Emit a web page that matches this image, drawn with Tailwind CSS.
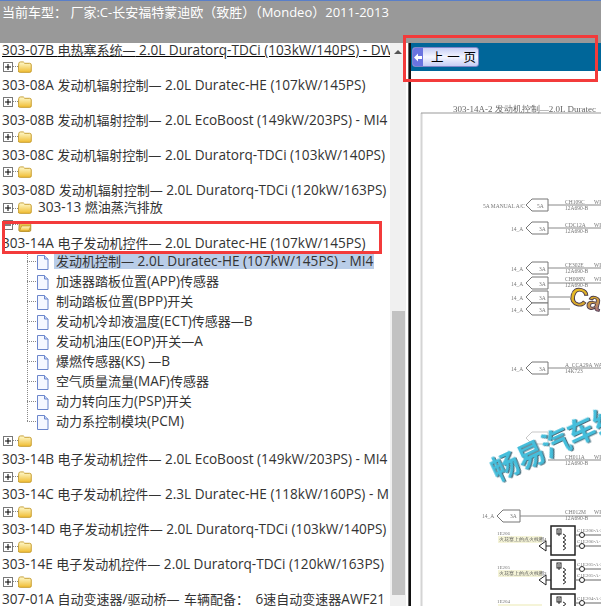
<!DOCTYPE html>
<html lang="zh">
<head>
    <meta charset="UTF-8">
    <title>303-14A</title>
    <script src="https://cdn.jsdelivr.net/npm/@tailwindcss/browser@4"></script>
</head>
<body class="bg-white overflow-hidden">
<svg width="0" height="0" class="absolute">
    <defs>
        <linearGradient id="fold" x1="0" y1="0" x2="0" y2="1"><stop offset="0" stop-color="#fffbd0"/><stop offset="1" stop-color="#f0bc30"/></linearGradient>
        <linearGradient id="logo" x1="0" y1="0" x2="1" y2="1"><stop offset="0" stop-color="#f2c81e"/><stop offset=".55" stop-color="#d9a92a"/><stop offset="1" stop-color="#9a5fa8"/></linearGradient>
        <symbol id="plus" viewBox="0 0 10 10"><rect x=".5" y=".5" width="9" height="9" fill="#fff" stroke="#777"/><path d="M2 5h6M5 2v6" stroke="#000"/></symbol>
        <symbol id="minus" viewBox="0 0 10 10"><rect x=".5" y=".5" width="9" height="9" fill="#fff" stroke="#777"/><path d="M2 5h6" stroke="#000"/></symbol>
        <symbol id="folder" viewBox="0 0 15 13"><path d="M.7 3q0-2 2-2h3l1.500 1.500h5.300q1.800 0 1.800 1.800v6.500q0 1.500-1.500 1.500h-10.600q-2 0-2-1.500z" fill="url(#fold)" stroke="#c49a2a"/></symbol>
        <symbol id="folder-open" viewBox="0 0 15 13"><path d="M.7 3q0-2 2-2h3l1.500 1.500h5.300q1.800 0 1.800 1.800v6.500q0 1.500-1.500 1.500h-10.600q-2 0-2-1.500z" fill="#e9c14f" stroke="#a8831e"/><path d="M1 11.800l2.500-6h10.800l-2.300 6z" fill="url(#fold)" stroke="#c49a2a"/></symbol>
        <symbol id="doc" viewBox="0 0 13 15"><path d="M1.500.5h7l3.500 3.500v10.500h-10.500z" fill="#f4f7ff" stroke="#6b86cc"/><path d="M8.500.5v3.500h3.500" fill="#c9d6f4" stroke="#6b86cc"/></symbol>
    </defs>
</svg>

<div class="relative w-[601px] h-[606px] overflow-hidden flex flex-col font-['Open_Sans','Noto_Sans_CJK_SC',sans-serif] text-[13.6px] text-[#333]">
    <!-- top bar -->
    <div class="h-[43px] shrink-0 bg-[#999999] border-t border-[#5a7fc8] pl-[2px] text-white text-[13px] leading-[22px] whitespace-nowrap">当前车型： 厂家:C-长安福特蒙迪欧（致胜）（Mondeo）2011-2013</div>

    <div class="flex flex-1 min-h-0">
        <!-- tree -->
        <div class="w-[390px] shrink-0 overflow-hidden whitespace-nowrap leading-[18px] -mt-[2px]">
            <div class="h-[18px] pl-[2px] underline decoration-black">303-07B <span class="text-[13px]">电热塞系统—</span> 2.0L Duratorq-TDCi (103kW/140PS) - DW</div>
            <div class="h-[17px] pb-[2px] flex items-center pl-[3px]"><svg class="w-[10px] h-[10px]"><use href="#plus"/></svg><div class="w-[5px] border-t border-dotted border-[#888]"></div><svg class="w-[14px] h-[12px]"><use href="#folder"/></svg></div>
            <div class="h-[18px] pl-[2px]">303-08A <span class="text-[13px]">发动机辐射控制—</span> 2.0L Duratec-HE (107kW/145PS)</div>
            <div class="h-[17px] pb-[2px] flex items-center pl-[3px]"><svg class="w-[10px] h-[10px]"><use href="#plus"/></svg><div class="w-[5px] border-t border-dotted border-[#888]"></div><svg class="w-[14px] h-[12px]"><use href="#folder"/></svg></div>
            <div class="h-[18px] pl-[2px]">303-08B <span class="text-[13px]">发动机辐射控制—</span> 2.0L EcoBoost (149kW/203PS) - MI4</div>
            <div class="h-[17px] pb-[2px] flex items-center pl-[3px]"><svg class="w-[10px] h-[10px]"><use href="#plus"/></svg><div class="w-[5px] border-t border-dotted border-[#888]"></div><svg class="w-[14px] h-[12px]"><use href="#folder"/></svg></div>
            <div class="h-[18px] pl-[2px]">303-08C <span class="text-[13px]">发动机辐射控制—</span> 2.0L Duratorq-TDCi (103kW/140PS)</div>
            <div class="h-[17px] pb-[2px] flex items-center pl-[3px]"><svg class="w-[10px] h-[10px]"><use href="#plus"/></svg><div class="w-[5px] border-t border-dotted border-[#888]"></div><svg class="w-[14px] h-[12px]"><use href="#folder"/></svg></div>
            <div class="h-[18px] pl-[2px]">303-08D <span class="text-[13px]">发动机辐射控制—</span> 2.0L Duratorq-TDCi (120kW/163PS)</div>
            <div class="h-[16px] flex items-center pl-[3px]"><svg class="w-[10px] h-[10px] mt-[2px]"><use href="#plus"/></svg><div class="w-[5px] mt-[2px] border-t border-dotted border-[#888]"></div><svg class="w-[14px] h-[12px] mt-[2px]"><use href="#folder"/></svg><span class="ml-[6px] -mt-[1px]">303-13 <span class="text-[13px]">燃油蒸汽排放</span></span></div>
            <div class="h-[19px] flex items-center pl-[3px]"><svg class="w-[10px] h-[10px]"><use href="#minus"/></svg><div class="w-[5px] border-t border-dotted border-[#888]"></div><svg class="w-[14px] h-[11px] mt-[3px]"><use href="#folder-open"/></svg></div>
            <div class="h-[18px] pl-[2px]">303-14A <span class="text-[13px]">电子发动机控件—</span> 2.0L Duratec-HE (107kW/145PS)</div>

            <!-- children -->
            <div class="relative pl-[27px] -mt-[1px]">
                <div class="absolute left-[27px] top-0 bottom-[10px] border-l border-dotted border-[#888]"></div>
                <div class="h-[20px] flex items-center"><div class="w-[9px] border-t border-dotted border-[#888]"></div><svg class="w-[13px] h-[15px] mt-[2px]"><use href="#doc"/></svg><span class="ml-[5px] bg-[#b9cde8] pl-[2px] pr-[1px] leading-[15px]"><span class="text-[13px]">发动机控制—</span> 2.0L Duratec-HE (107kW/145PS) - MI4</span></div>
                <div class="h-[20px] flex items-center"><div class="w-[9px] border-t border-dotted border-[#888]"></div><svg class="w-[13px] h-[15px] mt-[2px]"><use href="#doc"/></svg><span class="ml-[7px]"><span class="text-[13px]">加速器踏板位置</span>(APP)<span class="text-[13px]">传感器</span></span></div>
                <div class="h-[20px] flex items-center"><div class="w-[9px] border-t border-dotted border-[#888]"></div><svg class="w-[13px] h-[15px] mt-[2px]"><use href="#doc"/></svg><span class="ml-[7px]"><span class="text-[13px]">制动踏板位置</span>(BPP)<span class="text-[13px]">开关</span></span></div>
                <div class="h-[20px] flex items-center"><div class="w-[9px] border-t border-dotted border-[#888]"></div><svg class="w-[13px] h-[15px] mt-[2px]"><use href="#doc"/></svg><span class="ml-[7px]"><span class="text-[13px]">发动机冷却液温度</span>(ECT)<span class="text-[13px]">传感器—</span>B</span></div>
                <div class="h-[20px] flex items-center"><div class="w-[9px] border-t border-dotted border-[#888]"></div><svg class="w-[13px] h-[15px] mt-[2px]"><use href="#doc"/></svg><span class="ml-[7px]"><span class="text-[13px]">发动机油压</span>(EOP)<span class="text-[13px]">开关—</span>A</span></div>
                <div class="h-[20px] flex items-center"><div class="w-[9px] border-t border-dotted border-[#888]"></div><svg class="w-[13px] h-[15px] mt-[2px]"><use href="#doc"/></svg><span class="ml-[7px]"><span class="text-[13px]">爆燃传感器</span>(KS) <span class="text-[13px]">—</span>B</span></div>
                <div class="h-[20px] flex items-center"><div class="w-[9px] border-t border-dotted border-[#888]"></div><svg class="w-[13px] h-[15px] mt-[2px]"><use href="#doc"/></svg><span class="ml-[7px]"><span class="text-[13px]">空气质量流量</span>(MAF)<span class="text-[13px]">传感器</span></span></div>
                <div class="h-[20px] flex items-center"><div class="w-[9px] border-t border-dotted border-[#888]"></div><svg class="w-[13px] h-[15px] mt-[2px]"><use href="#doc"/></svg><span class="ml-[7px]"><span class="text-[13px]">动力转向压力</span>(PSP)<span class="text-[13px]">开关</span></span></div>
                <div class="h-[20px] flex items-center"><div class="w-[9px] border-t border-dotted border-[#888]"></div><svg class="w-[13px] h-[15px] mt-[2px]"><use href="#doc"/></svg><span class="ml-[7px]"><span class="text-[13px]">动力系控制模块</span>(PCM)</span></div>
            </div>

            <div class="h-[19px] flex items-center pl-[3px]"><svg class="w-[10px] h-[10px]"><use href="#plus"/></svg><div class="w-[5px] border-t border-dotted border-[#888]"></div><svg class="w-[14px] h-[12px]"><use href="#folder"/></svg></div>
            <div class="h-[18px] pl-[2px]">303-14B <span class="text-[13px]">电子发动机控件—</span> 2.0L EcoBoost (149kW/203PS) - MI4</div>
            <div class="h-[17px] flex items-center pl-[3px]"><svg class="w-[10px] h-[10px]"><use href="#plus"/></svg><div class="w-[5px] border-t border-dotted border-[#888]"></div><svg class="w-[14px] h-[12px]"><use href="#folder"/></svg></div>
            <div class="h-[18px] pl-[2px]">303-14C <span class="text-[13px]">电子发动机控件—</span> 2.3L Duratec-HE (118kW/160PS) - M</div>
            <div class="h-[17px] flex items-center pl-[3px]"><svg class="w-[10px] h-[10px]"><use href="#plus"/></svg><div class="w-[5px] border-t border-dotted border-[#888]"></div><svg class="w-[14px] h-[12px]"><use href="#folder"/></svg></div>
            <div class="h-[18px] pl-[2px]">303-14D <span class="text-[13px]">电子发动机控件—</span> 2.0L Duratorq-TDCi (103kW/140PS)</div>
            <div class="h-[17px] flex items-center pl-[3px]"><svg class="w-[10px] h-[10px]"><use href="#plus"/></svg><div class="w-[5px] border-t border-dotted border-[#888]"></div><svg class="w-[14px] h-[12px]"><use href="#folder"/></svg></div>
            <div class="h-[18px] pl-[2px]">303-14E <span class="text-[13px]">电子发动机控件—</span> 2.0L Duratorq-TDCi (120kW/163PS)</div>
            <div class="h-[17px] flex items-center pl-[3px]"><svg class="w-[10px] h-[10px]"><use href="#plus"/></svg><div class="w-[5px] border-t border-dotted border-[#888]"></div><svg class="w-[14px] h-[12px]"><use href="#folder"/></svg></div>
            <div class="h-[18px] pl-[2px]">307-01A <span class="text-[13px]">自动变速器</span>/<span class="text-[13px]">驱动桥—</span> <span class="text-[13px] ml-[1px]">车辆配备：</span> <span class="ml-[3px]">6</span><span class="text-[13px]">速自动变速器</span>AWF21</div>
        </div>

        <!-- scrollbar -->
        <div class="w-[16px] shrink-0 bg-[#f0f0f0] flex flex-col">
            <div class="h-[18px] flex items-center justify-center"><div class="w-0 h-0 border-x-[4px] border-x-transparent border-b-[4px] border-b-[#555]"></div></div>
            <div class="h-[250px]"></div>
            <div class="flex-1 bg-[#c2c2c2] ml-[2px] mr-[1px] mb-[11px]"></div>
        </div>
        <div class="w-[2px] shrink-0 bg-white"></div>
        <div class="w-[3px] shrink-0 bg-[#111] border-l border-[#666]"></div>

        <!-- document pane -->
        <div class="relative flex-1 min-w-0 overflow-hidden">
            <div class="h-[28px] bg-[#006699] pl-[1px] pt-[4px]">
                <div class="w-[67px] h-[20px] flex rounded-[3px] border border-[#7f86c8] bg-gradient-to-b from-[#c6cdf4] via-[#f5f6ff] to-[#c6cdf4] overflow-hidden">
                    <div class="w-[10px] bg-[#6a74e0] flex items-center justify-center">
                        <svg width="8" height="9" viewBox="0 0 8 9"><path d="M0 4.500L4 .5v2.500h4v3H4v2.500z" fill="#fff"/></svg>
                    </div>
                    <div class="flex-1 pl-[8px] text-[12.500px] leading-[18px] text-black whitespace-nowrap [word-spacing:1px] font-['Noto_Sans_CJK_SC',sans-serif]">上 一 页</div>
                </div>
            </div>
            <!-- schematic page, free canvas in page coordinates -->
            <svg class="absolute left-0 top-0 blur-[0.5px]" width="190" height="563" viewBox="411 43 190 563" font-family="Liberation Serif" font-size="6" fill="#777">
                <text x="453" y="112" font-size="9" fill="#666">303-14A-2 发动机控制—2.0L Duratec</text>
                <path d="M421.500 113V606" stroke="#d4d4d4" stroke-width="2" fill="none"/>
                <path d="M421 113H601" stroke="#999" stroke-width="1" fill="none"/>

                <g stroke="#777" stroke-width="1" fill="#fff">
                    <path d="M526 205l6-6h16v12h-16z"/>
                    <path d="M526 228l6-6h16v12h-16z"/>
                    <path d="M526 268l6-6h16v12h-16z"/>
                    <path d="M526 283l6-6h16v12h-16z"/>
                    <path d="M526 297l6-6h16v12h-16z"/>
                    <path d="M526 309l6-6h16v12h-16z"/>
                    <path d="M526 368l6-6h16v12h-16z"/>
                    <path d="M526 438l6-6h16v12h-16z" opacity=".4"/>
                    <path d="M497 516l6-6h17v12h-17z"/>
                </g>
                <path d="M548 205H601M548 228H601M548 268H601M548 283H601M548 297H570M548 309H570M548 368H601M548 460H601M520 516H601" stroke="#888" stroke-width="1" fill="none"/>

                <g font-size="5.500">
                    <text x="483" y="208">5A MANUAL A/C</text><text x="537" y="208">5A</text>
                    <text x="511" y="231">14_A</text><text x="539" y="231">3A</text>
                    <text x="511" y="271">14_A</text><text x="539" y="271">3A</text>
                    <text x="511" y="286">14_A</text><text x="539" y="286">3A</text>
                    <text x="511" y="300">14_A</text><text x="539" y="300">3A</text>
                    <text x="511" y="312">14_A</text><text x="539" y="312">3A</text>
                    <text x="511" y="371">14_A</text><text x="539" y="371">3A</text>
                    <text x="482" y="518">14_A</text><text x="510" y="518">3A</text>
                    <text x="565" y="204">CH109C</text><text x="565" y="210">12A690-B</text><text x="594" y="204">WK</text>
                    <text x="565" y="227">CDC12A</text><text x="565" y="233">12A690-B</text><text x="594" y="227">WK</text>
                    <text x="565" y="267">CE302E</text><text x="565" y="273">12A690-B</text><text x="594" y="267">WK</text>
                    <text x="565" y="281">CH008N</text><text x="565" y="287">12A690-B</text><text x="594" y="281">WK</text>
                    <text x="565" y="367">A_CCA29A</text><text x="565" y="373">14K723</text><text x="594" y="367">WA</text>
                    <text x="565" y="459">CH011A</text><text x="565" y="465">12A690-B</text><text x="594" y="459">WK</text>
                    <text x="565" y="514">CH012M</text><text x="565" y="520">12A690-B</text><text x="594" y="514">WK</text>
                </g>

                <!-- coils -->
                <g stroke="#222" fill="none">
                    <rect x="551" y="526" width="24" height="29" stroke-width="1.500"/>
                    <rect x="551" y="560" width="24" height="29" stroke-width="1.500"/>
                    <rect x="551" y="594" width="24" height="29" stroke-width="1.500"/>
                    <path d="M559 530v6M563 534q5 2 0 4q5 2 0 4q5 2 0 4q5 2 0 4M559 564v6M563 568q5 2 0 4q5 2 0 4q5 2 0 4q5 2 0 4M559 598v6M563 602q5 2 0 4"/>
                    <rect x="557" y="529" width="4" height="5"/><rect x="557" y="563" width="4" height="5"/><rect x="557" y="597" width="4" height="5"/>
                    <path d="M546 541l-7 5 7 5zM546 575l-7 5 7 5zM546 546h5M546 580h5"/>
                    <path d="M575 535h26M575 546h26M575 569h26M575 580h26M575 603h26" stroke="#666"/>
                    <circle cx="582" cy="535" r="2.500" fill="#fff"/><circle cx="582" cy="546" r="2.500" fill="#fff"/><circle cx="582" cy="569" r="2.500" fill="#fff"/><circle cx="582" cy="580" r="2.500" fill="#fff"/><circle cx="582" cy="603" r="2.500" fill="#fff"/>
                </g>
                <g font-size="5">
                    <text x="497" y="535">1E206</text><rect x="498" y="536" width="44" height="7" fill="#f5f4d8"/><text x="499" y="541" fill="#555">火花塞上的点火线圈4</text>
                    <text x="497" y="569">1E205</text><rect x="498" y="570" width="44" height="7" fill="#f5f4d8"/><text x="499" y="575" fill="#555">火花塞上的点火线圈3</text>
                    <text x="497" y="603">1E204</text><rect x="498" y="604" width="44" height="2" fill="#f5f4d8"/>
                    <text x="577" y="532">C1E206-A-2</text><text x="577" y="543">C1E206-A-1</text><text x="577" y="566">C1E205-A-2</text><text x="577" y="577">C1E205-A-1</text><text x="577" y="600">C1E204-A-2</text>
                </g>

                <!-- watermarks -->
                <text x="568" y="303" font-family="Liberation Sans" font-weight="700" font-size="25" fill="url(#logo)" stroke="#4a3a4a" stroke-width=".9" transform="rotate(15 568 303)">Ca</text>
                <text x="497" y="482" font-family="Noto Sans CJK SC" font-weight="700" font-size="28" fill="#45bedb" class="drop-shadow-[1px_1px_0_#4a6a78]" transform="rotate(-25 497 482)">畅易汽车维</text>
            </svg>
        </div>
    </div>

    <!-- red annotation boxes -->
    <div class="absolute left-[2px] top-[221px] w-[380px] h-[33px] border-[3px] border-[#f33b3b]"></div>
    <div class="absolute left-[403px] top-[35px] w-[195px] h-[47px] border-[3px] border-[#f33b3b]"></div>
</div>
</body>
</html>
